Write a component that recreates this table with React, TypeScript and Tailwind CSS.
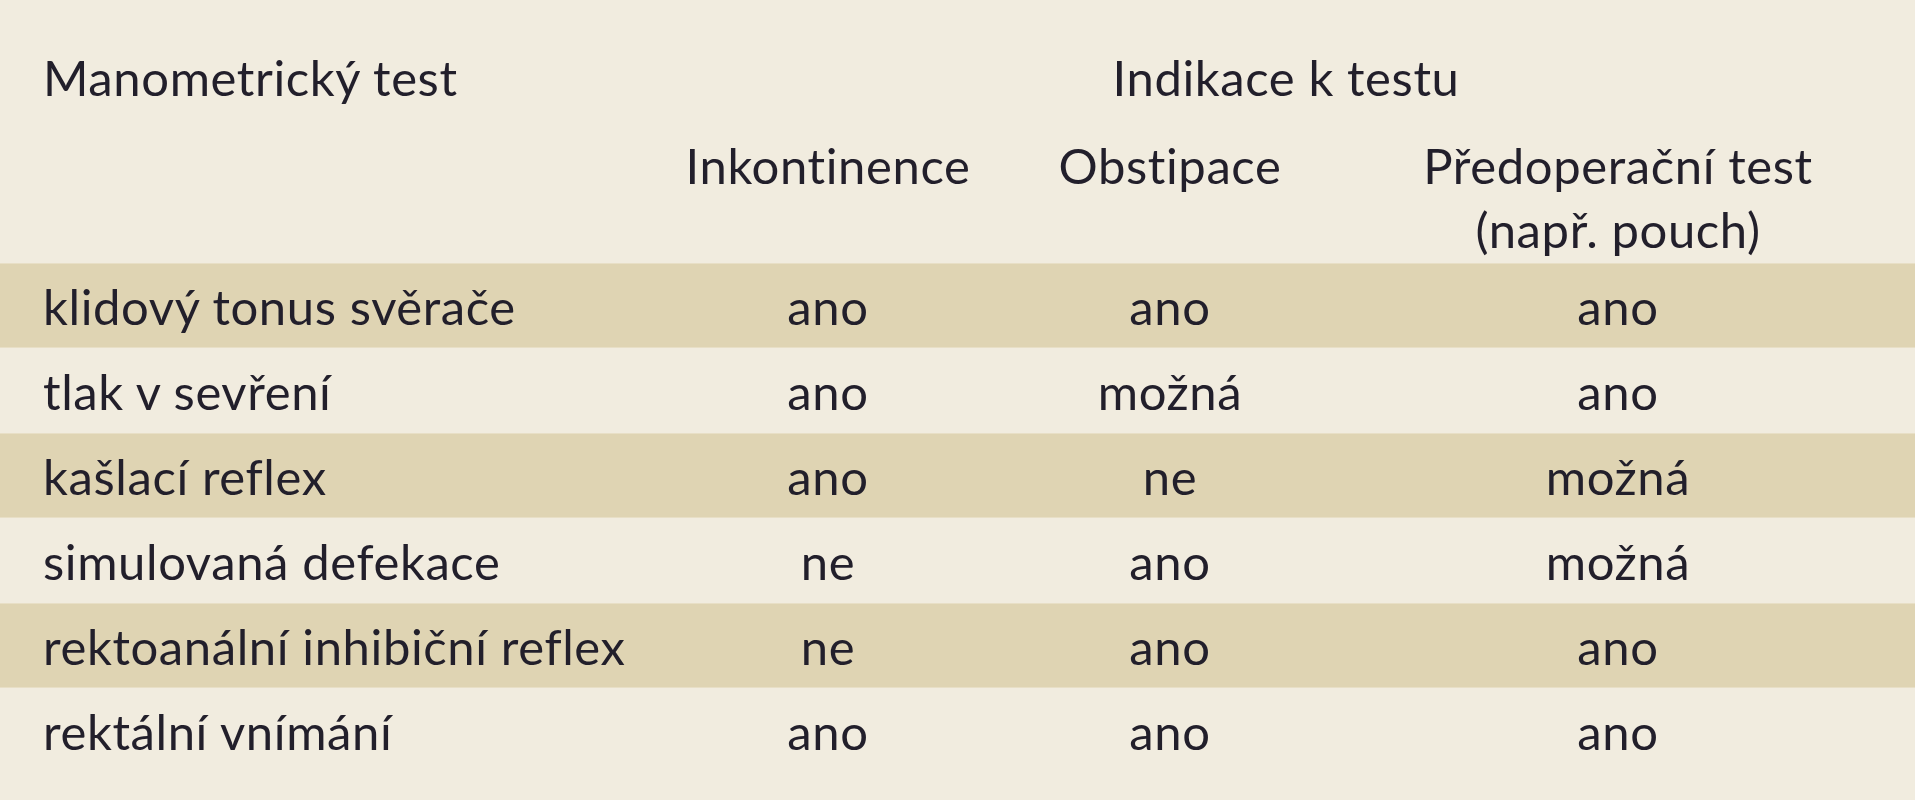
const rows = [
  ["klidový tonus svěrače", "ano", "ano", "ano"],
  ["tlak v sevření", "ano", "možná", "ano"],
  ["kašlací reflex", "ano", "ne", "možná"],
  ["simulovaná defekace", "ne", "ano", "možná"],
  ["rektoanální inhibiční reflex", "ne", "ano", "ano"],
  ["rektální vnímání", "ano", "ano", "ano"],
];

const cols = "grid grid-cols-[680px_296px_388px_508px]";

export default function App() {
  return (
    <div
      className="min-h-[800px] w-[1915px] bg-[#f1ecdf] text-[49px] tracking-[0.6px] text-[#221f2b]"
      style={{ fontFamily: "Lato, 'Open Sans', sans-serif" }}
    >
      <div className={`${cols} h-[263px] pt-[45px] leading-[64px]`}>
        <div className="pl-[43px]">Manometrický test</div>
        <div className="col-span-3 pl-[20px] text-center">Indikace k testu</div>
        <div className="mt-[21px]" />
        <div className="mt-[21px] text-center">Inkontinence</div>
        <div className="mt-[21px] text-center">Obstipace</div>
        <div className="mt-[21px] text-center">
          Předoperační test
          <br />
          (např. pouch)
        </div>
      </div>
      {rows.map((r, i) => (
        <div
          key={r[0]}
          className={`${cols} h-[85px] items-center leading-[64px] ${
            i % 2 === 0 ? "border-y border-[#e8dfc6] bg-[#dfd4b3]" : "bg-[#f1ecdf]"
          }`}
        >
          <div className="pl-[43px]">{r[0]}</div>
          <div className="text-center">{r[1]}</div>
          <div className="text-center">{r[2]}</div>
          <div className="text-center">{r[3]}</div>
        </div>
      ))}
    </div>
  );
}
